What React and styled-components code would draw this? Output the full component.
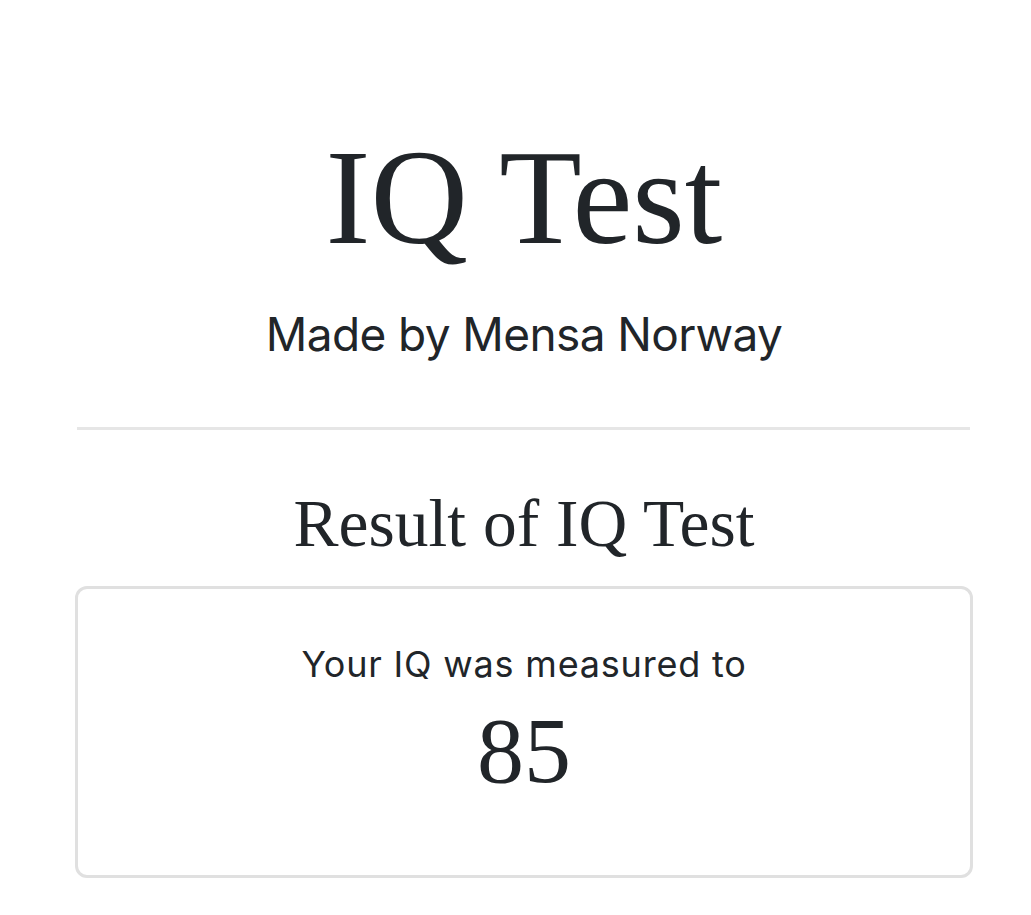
import React from "react";
import styled, { createGlobalStyle } from "styled-components";

const GlobalStyle = createGlobalStyle`
  html, body {
    margin: 0;
    padding: 0;
    background: #ffffff;
    color: #212529;
  }
`;

export default function App() {
  return (
    <>
      <GlobalStyle />
      <Page>
        <Header>
          <Title>IQ Test</Title>
          <Subtitle>Made by Mensa Norway</Subtitle>
        </Header>
        <Divider />
        <ResultSection>
          <ResultHeading>Result of IQ Test</ResultHeading>
          <Card>
            <CardLabel>Your IQ was measured to</CardLabel>
            <Score>85</Score>
          </Card>
        </ResultSection>
      </Page>
    </>
  );
}

const Page = styled.main`
  display: flex;
  flex-direction: column;
  padding: 130px 58px 0 75px;
  text-align: center;
`;

const Header = styled.header`
  display: flex;
  flex-direction: column;
  align-items: center;
  gap: 46px;
`;

const Title = styled.h1`
  margin: 0;
  font-family: "Liberation Serif", "Times New Roman", serif;
  font-weight: 400;
  font-size: 135px;
  line-height: 1;
`;

const Subtitle = styled.p`
  margin: 0;
  font-family: Inter, "Noto Sans", sans-serif;
  font-size: 46px;
  letter-spacing: -0.6px;
  line-height: 1;
`;

const Divider = styled.hr`
  margin: 70px 3px 0 2px;
  border: 0;
  border-top: 3px solid #e6e6e6;
`;

const ResultSection = styled.section`
  display: flex;
  flex-direction: column;
  padding-top: 60px;
  gap: 28px;
`;

const ResultHeading = styled.h2`
  margin: 0;
  font-family: "Liberation Serif", "Times New Roman", serif;
  font-weight: 400;
  font-size: 67.5px;
  line-height: 1;
`;

const Card = styled.div`
  display: flex;
  flex-direction: column;
  align-items: center;
  gap: 21px;
  padding: 57px 20px 78px;
  border: 3px solid #e0e0e0;
  border-radius: 12px;
`;

const CardLabel = styled.p`
  margin: 0;
  font-family: Inter, "Noto Sans", sans-serif;
  font-size: 36px;
  letter-spacing: 0.8px;
  line-height: 1;
`;

const Score = styled.div`
  font-family: "Liberation Serif", "Times New Roman", serif;
  font-size: 94px;
  line-height: 1;
`;
